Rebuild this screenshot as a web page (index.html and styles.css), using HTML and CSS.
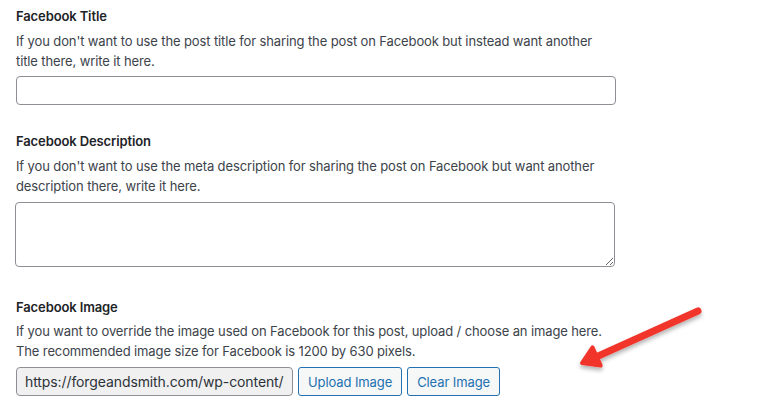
FILE: index.html
```html
<!DOCTYPE html>
<html lang="en">
<head>
    <meta charset="UTF-8">
    <meta name="viewport" content="width=device-width, initial-scale=1.0">
    <title>Facebook Sharing</title>
    <link rel="stylesheet" href="styles.css">
</head>
<body>

<div class="settings">
    <div class="field">
        <label for="fbTitle">Facebook Title</label>
        <p class="description">If you don't want to use the post title for sharing the post on Facebook but instead want another title there, write it here.</p>
        <input type="text" id="fbTitle" class="text-input">
    </div>

    <div class="field field-desc">
        <label for="fbDescription">Facebook Description</label>
        <p class="description">If you don't want to use the meta description for sharing the post on Facebook but want another description there, write it here.</p>
        <textarea id="fbDescription" class="text-area"></textarea>
    </div>

    <div class="field field-image">
        <label for="fbImage">Facebook Image</label>
        <p class="description">If you want to override the image used on Facebook for this post, upload / choose an image here.<br>The recommended image size for Facebook is 1200 by 630 pixels.</p>
        <div class="image-row">
            <input type="text" id="fbImage" class="url-input" value="https://forgeandsmith.com/wp-content/uploads/2020/05/facebook.jpg" readonly>
            <button type="button" class="button">Upload Image</button>
            <button type="button" class="button">Clear Image</button>
        </div>
    </div>
</div>

<!-- annotation arrow -->
<svg class="arrow" width="140" height="80" viewBox="0 0 140 80">
    <defs>
        <filter id="shadow" x="-20%" y="-20%" width="140%" height="160%">
            <feDropShadow dx="0" dy="3" stdDeviation="2" flood-color="#000" flood-opacity="0.3"/>
        </filter>
    </defs>
    <g filter="url(#shadow)">
        <line x1="126" y1="14" x2="24" y2="60" stroke="#f2362c" stroke-width="7" stroke-linecap="round"/>
        <polygon points="10,66 20.5,50.4 28.7,68.6" fill="#f2362c" stroke="#f2362c" stroke-width="4" stroke-linejoin="round"/>
    </g>
</svg>

</body>
</html>
```

FILE: styles.css
```css
body {
    margin: 0;
    font-family: Inter, "Noto Sans", sans-serif;
    font-size: 13px;
    letter-spacing: -0.12px;
    color: #3c434a;
    background-color: #fff;
}
.settings {
    padding: 6px 0 0 16px;
    width: 600px;
}
.field {
    margin-bottom: 26px;
}
.field-desc {
    margin-bottom: 30px;
}
label {
    display: block;
    font-weight: 600;
    line-height: 20px;
    color: #1d2327;
}
.description {
    margin: 5px 0 5px;
    line-height: 20px;
}
.field-desc .description {
    margin-bottom: 6px;
}
.field-image .description {
    line-height: 19.5px;
    margin-bottom: 6px;
}
.text-input {
    display: block;
    box-sizing: border-box;
    width: 600px;
    height: 29px;
    margin: 0;
    border: 1px solid #8c8f94;
    border-radius: 4px;
}
.text-area {
    display: block;
    box-sizing: border-box;
    width: 600px;
    height: 65px;
    margin: 0 0 0 -1px;
    border: 1px solid #8c8f94;
    border-radius: 4px;
}
.image-row {
    display: flex;
    gap: 5px;
    height: 29px;
}
.url-input {
    box-sizing: border-box;
    width: 277px;
    height: 29px;
    padding: 0 8px;
    border: 1px solid #8c8f94;
    border-radius: 4px;
    background-color: #f0f0f1;
    font-family: inherit;
    font-size: 14px;
    letter-spacing: -0.1px;
    color: #2c3338;
}
.button {
    box-sizing: border-box;
    height: 29px;
    padding: 0 9px;
    border: 1px solid #2271b1;
    border-radius: 3px;
    background-color: #f6f7f7;
    color: #2271b1;
    font-family: inherit;
    font-size: 13px;
    letter-spacing: -0.1px;
    cursor: pointer;
}
.arrow {
    position: absolute;
    left: 572px;
    top: 297px;
}
```
